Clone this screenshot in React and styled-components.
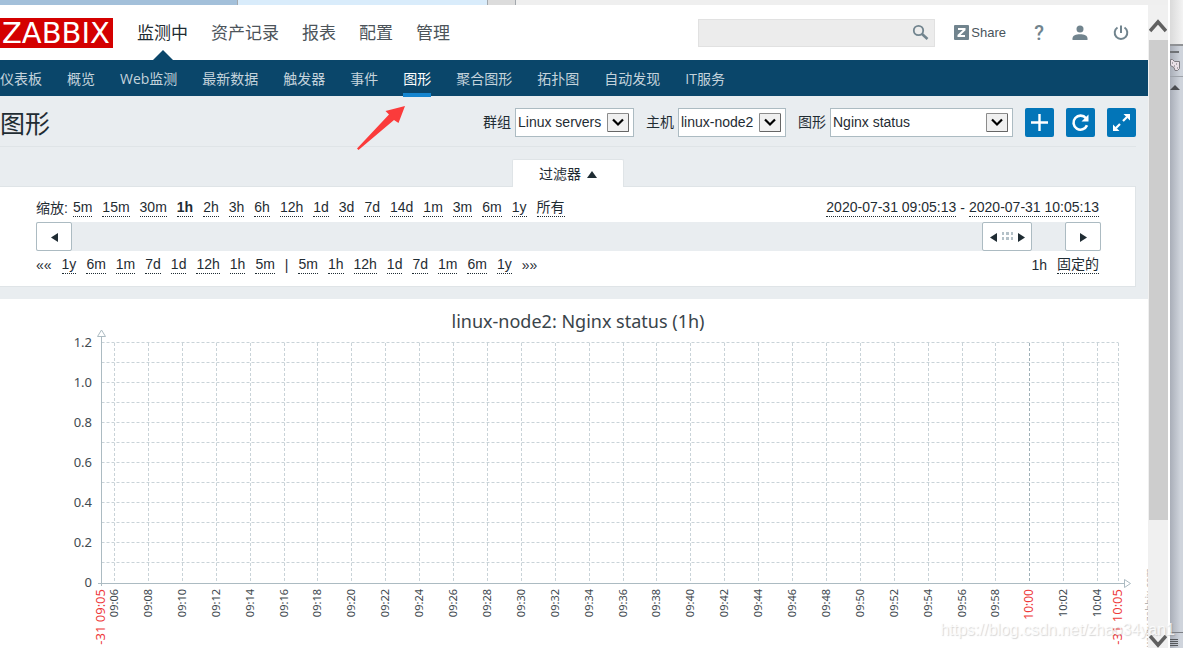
import React from "react";
import styled, { createGlobalStyle, css } from "styled-components";

const ui = `"Liberation Sans", "Noto Sans CJK SC", sans-serif`;
const ink = "#1f2c33";
const line = "#dfe4e7";
const blue = "#0275b8";
const navy = "#0a466a";

const GlobalStyle = createGlobalStyle`
  * { box-sizing: border-box; }
  body { margin: 0; font: 14px/18px ${ui}; color: ${ink}; background: #fff; }
  a { color: inherit; text-decoration: none; }
  button { font: inherit; color: inherit; padding: 0; cursor: pointer; }
`;

const Desktop = styled.div`
  position: relative;
  display: flex;
  height: 100vh;
  overflow: hidden;
`;
const Browser = styled.div`
  flex: 1;
  min-width: 0;
  display: flex;
  flex-direction: column;
`;
const TabStrip = styled.div`
  flex: none;
  display: flex;
  height: 5px;
  background: #efefef;
`;
const Tab = styled.div`
  width: ${(p) => p.$w}px;
  background: ${(p) => p.$bg};
  border-right: 1px solid #a3a8ad;
`;
const Viewport = styled.div`
  flex: 1;
  min-height: 0;
  display: flex;
`;
const Page = styled.div`
  flex: 1;
  min-width: 0;
  overflow: hidden;
  background: #e9edf0;
`;

const Header = styled.header`
  display: flex;
  height: 55px;
  background: #fff;
`;
const Logo = styled.a`
  align-self: flex-start;
  margin-top: 13px;
  width: 113px;
  height: 30px;
  padding-left: 2px;
  background: #d40000;
  color: #fff;
  font: 29px/31px "DejaVu Sans", sans-serif;
`;
const MainMenu = styled.nav`
  display: flex;
  gap: 23px;
  margin-left: 24px;
  font-size: 17px;
  line-height: 58px;
`;
const MainLink = styled.a`
  position: relative;
  color: ${(p) => (p.$active ? ink : "#4c545a")};
  ${(p) =>
    p.$active &&
    css`
      &::after {
        content: "";
        position: absolute;
        left: 50%;
        bottom: 0;
        margin-left: -10px;
        border: 10px solid transparent;
        border-top: 0;
        border-bottom-color: ${navy};
      }
    `}
`;
const Tools = styled.div`
  display: flex;
  align-items: center;
  margin-left: auto;
  padding-right: 15px;
  gap: 17px;
  color: #71848e;
`;
const SearchBox = styled.label`
  display: flex;
  align-items: center;
  width: 237px;
  height: 28px;
  padding-right: 5px;
  border: 1px solid #e1e1e1;
  background: #ececec;
`;
const SearchInput = styled.input`
  flex: 1;
  min-width: 0;
  border: 0;
  background: transparent;
  outline: none;
`;
const Share = styled.a`
  display: flex;
  align-items: center;
  gap: 2px;
  margin-left: 2px;
  margin-right: 4px;
  font-size: 13px;
  color: #48545b;
`;
const ToolButton = styled.button`
  display: grid;
  place-items: center;
  width: 24px;
  height: 24px;
  border: 0;
  background: none;
`;
const Question = styled.span`
  font: 500 20px/24px Roboto, sans-serif;
  color: #71848e;
`;

const SubMenu = styled.nav`
  display: flex;
  gap: 25px;
  height: 36px;
  background: ${navy};
  font: 14px/38px "Open Sans", "Noto Sans CJK SC", sans-serif;
`;
const SubLink = styled.a`
  height: 37px;
  color: ${(p) => (p.$active ? "#fff" : "#c4d3dc")};
  border-bottom: ${(p) => (p.$active ? "4px solid #1585cf" : "0")};
  white-space: nowrap;
`;

const TitleBar = styled.div`
  display: flex;
  align-items: center;
  height: 51px;
  margin-right: 12px;
  border-bottom: 1px solid ${line};
`;
const Title = styled.h1`
  margin: 0 auto 0 0;
  padding-top: 6px;
  font: 25px/50px ${ui};
`;
const Controls = styled.form`
  display: flex;
  align-items: center;
  gap: 12px;
  padding-top: 2px;
`;
const Field = styled.label`
  display: flex;
  align-items: center;
  gap: 4px;
`;
const SelectWrap = styled.span`
  position: relative;
  width: ${(p) => p.$w}px;
`;
const Select = styled.select`
  appearance: none;
  display: block;
  width: 100%;
  height: 29px;
  padding: 0 0 0 2px;
  border: 1px solid #acbbc2;
  border-radius: 0;
  background: #fff;
  color: ${ink};
  font: 14px ${ui};
`;
const Chevron = styled.svg`
  position: absolute;
  right: 5px;
  top: 5px;
  width: 22px;
  height: 19px;
  pointer-events: none;
`;
const BlueButton = styled.button`
  display: grid;
  place-items: center;
  width: 29px;
  height: 29px;
  border: 0;
  border-radius: 2px;
  background: ${blue};
`;

const FilterArea = styled.section`
  padding: 12px 12px 12px 0;
`;
const FilterTab = styled.button`
  position: relative;
  display: flex;
  align-items: center;
  justify-content: center;
  gap: 6px;
  width: 112px;
  height: 28px;
  margin: 0 auto -1px;
  border: 1px solid ${line};
  border-bottom: 0;
  border-radius: 2px 2px 0 0;
  background: #fff;
`;
const FilterPanel = styled.div`
  padding: 0 34px 0 36px;
  border: 1px solid ${line};
  border-left: 0;
  background: #fff;
`;
const RangeRow = styled.div`
  display: flex;
  align-items: flex-end;
  justify-content: space-between;
  height: 35px;
  padding-bottom: ${(p) => p.$pad}px;
  padding-right: 2px;
`;
const Links = styled.div`
  display: flex;
  gap: ${(p) => p.$gap}px;
  white-space: pre;
`;
const Plain = styled.span`
  height: 18px;
`;
const RangeLink = styled.a`
  height: 18px;
  line-height: 17px;
  border-bottom: 1px dotted ${ink};
  font-weight: ${(p) => (p.$active ? 700 : 400)};
`;
const Track = styled.div`
  display: flex;
  height: 29px;
  background: #e9edf0;
`;
const TrackButton = styled.button`
  display: flex;
  align-items: center;
  justify-content: center;
  gap: 5px;
  width: ${(p) => p.$w}px;
  margin-left: ${(p) => (p.$push ? "auto" : 0)};
  margin-right: ${(p) => (p.$push ? "33px" : 0)};
  border: 1px solid #acbbc2;
  border-radius: 2px;
  background: #fff;
`;

const ChartPanel = styled.main`
  background: #fff;
`;
const ChartSvg = styled.svg`
  display: block;
  width: 100%;
  font-family: "Noto Sans", sans-serif;
`;

const Scrollbar = styled.div`
  display: flex;
  flex-direction: column;
  width: 20px;
  padding-top: 1px;
  background: #f0f0f0;
`;
const ScrollEnd = styled.button`
  display: grid;
  place-items: center;
  height: ${(p) => p.$h}px;
  padding-top: ${(p) => p.$pad}px;
  border: 0;
  background: none;
`;
const ScrollThumb = styled.div`
  flex: 480;
  margin-left: 1px;
  background: #cdcdcd;
`;
const ScrollRest = styled.div`
  flex: 113;
`;

const SideWindow = styled.aside`
  display: flex;
  flex-direction: column;
  width: 15px;
  border-left: 2px solid #fff;
  background: linear-gradient(90deg, #a9aeb8, #cfd4dc 80%);
`;
const SideTop = styled.div`
  height: 46px;
  border-bottom: 2px solid #8f9194;
  background: linear-gradient(90deg, #dadada, #f3f3f3);
`;
const SideTools = styled.svg`
  display: block;
  width: 13px;
  height: 48px;
`;
const SideFoot = styled.svg`
  display: block;
  width: 13px;
  height: 16px;
  margin-top: auto;
`;

const RedArrow = styled.svg`
  position: absolute;
  left: 356px;
  top: 104px;
  width: 52px;
  height: 48px;
  pointer-events: none;
`;
const Watermark = styled.div`
  position: absolute;
  right: 8px;
  bottom: 8px;
  font: 16px/20px "Liberation Sans", sans-serif;
  color: rgba(255, 255, 255, 0.8);
  text-shadow: 1px 1px 1px rgba(120, 120, 120, 0.3);
  pointer-events: none;
`;

const Triangle = ({ dir }) => (
  <svg width={dir === "up" ? 10 : 7} height={dir === "up" ? 8 : 10} fill={ink}>
    <path d={{ left: "M7 1v9L0 5.500z", right: "M0 1v9l7-4.500z", up: "M0 8h10L5 1z" }[dir]} />
  </svg>
);

function Dropdown({ label, value, width }) {
  return (
    <Field>
      {label}
      <SelectWrap $w={width}>
        <Select defaultValue={value}>
          <option>{value}</option>
        </Select>
        <Chevron viewBox="0 0 22 19">
          <path fill="#f0f0f0" stroke="#8c8c8c" d="M.5.5h21v18H.5z" />
          <path fill="none" stroke="#666" d="M1 18.500h20.500V1" />
          <path fill="none" stroke="#000" strokeWidth="2.200" d="M6 6.500l5 5 5-5" />
        </Chevron>
      </SelectWrap>
    </Field>
  );
}

const mainItems = ["监测中", "资产记录", "报表", "配置", "管理"];
const subItems = ["仪表板", "概览", "Web监测", "最新数据", "触发器", "事件", "图形", "聚合图形", "拓扑图", "自动发现", "IT服务"];
const zooms = ["5m", "15m", "30m", "1h", "2h", "3h", "6h", "12h", "1d", "3d", "7d", "14d", "1m", "3m", "6m", "1y", "所有"];
const back = ["1y", "6m", "1m", "7d", "1d", "12h", "1h", "5m"];
const forward = [...back].reverse();

const LEFT = 101.5;
const RIGHT = 1118.5;
const BASE = 284.5;
const minutes = Array.from({ length: 30 }, (_, i) => {
  const m = 6 + i * 2;
  const label = m < 60 ? `09:${String(m).padStart(2, "0")}` : `10:${String(m - 60).padStart(2, "0")}`;
  return { label, x: Math.round(114 + i * 33.9) + 0.5, hour: m === 60 };
});
const rows = Array.from({ length: 12 }, (_, i) => Math.floor(BASE - 0.5 - (i + 1) * 20.08) + 0.5);
const yLabels = ["0", "0.2", "0.4", "0.6", "0.8", "1.0", "1.2"];

function TimeLabel({ x, size = 11, fill = "#3f4a50", children }) {
  return (
    <text transform={`translate(${x} 290) rotate(-90)`} textAnchor="end" fontSize={size} fill={fill}>
      {children}
    </text>
  );
}

function Chart() {
  return (
    <ChartSvg viewBox="0 0 1148 349" role="img" aria-label="Nginx status">
      <text x="578" y="29" textAnchor="middle" fontSize="18" fill="#3a444a">
        linux-node2: Nginx status (1h)
      </text>
      <g stroke="#c9d3d8" strokeDasharray="3 2">
        {rows.map((y) => (
          <line key={y} x1={LEFT} x2={RIGHT} y1={y} y2={y} />
        ))}
        {minutes.map((m) => (
          <line key={m.label} x1={m.x} x2={m.x} y1="44" y2={BASE} stroke={m.hour ? "#9fb0b8" : undefined} />
        ))}
        <line x1={RIGHT} x2={RIGHT} y1="44" y2={BASE} />
      </g>
      <g stroke="#acbbc2" fill="#fff">
        <path d="M101.500 37v250M98 284.500h1026" />
        <path d="M97.500 37.500h8l-4-6.500zM1124.500 280.500v8l6-4z" />
      </g>
      {yLabels.map((t, i) => (
        <text key={t} x="92" y={288 - i * 40} textAnchor="end" fontSize="13" fill="#3f4a50">
          {t}
        </text>
      ))}
      {minutes.map((m) => (
        <TimeLabel key={m.label} x={m.x + 3} size={m.hour ? 12 : 11} fill={m.hour ? "#ee3b3b" : undefined}>
          {m.label}
        </TimeLabel>
      ))}
      <TimeLabel x={105} size={13} fill="#ee3b3b">-31 09:05</TimeLabel>
      <TimeLabel x={1122} size={13} fill="#ee3b3b">-31 10:05</TimeLabel>
      <text transform="translate(1153 348) rotate(-90)" fontSize="10" fill="#b5b5b5">
        www.zabbix.com
      </text>
    </ChartSvg>
  );
}

export default function App() {
  return (
    <Desktop>
      <GlobalStyle />
      <Browser>
        <TabStrip>
          <Tab $w={238} $bg="#a3c0da" />
          <Tab $w={250} $bg="#d9ecfb" />
          <Tab $w={28} $bg="#dcdcdc" />
        </TabStrip>
        <Viewport>
          <Page>
            <Header>
              <Logo href="#">ZABBIX</Logo>
              <MainMenu>
                {mainItems.map((t, i) => (
                  <MainLink key={t} href="#" $active={i === 0}>{t}</MainLink>
                ))}
              </MainMenu>
              <Tools>
                <SearchBox>
                  <SearchInput type="search" aria-label="Search" />
                  <svg width="17" height="17" viewBox="0 0 17 17" fill="none" stroke="#71848e">
                    <circle cx="6.500" cy="6.500" r="4.700" strokeWidth="1.800" />
                    <path d="M10 10l5.500 5" strokeWidth="2.600" />
                  </svg>
                </SearchBox>
                <Share href="#">
                  <svg width="15" height="15" viewBox="0 0 15 15">
                    <rect width="15" height="15" rx="1" fill="#71848e" />
                    <path d="M4 4h6.500v.8L4.500 10.500v.6H11" fill="none" stroke="#fff" strokeWidth="2" />
                  </svg>
                  Share
                </Share>
                <ToolButton aria-label="Help"><Question>?</Question></ToolButton>
                <ToolButton aria-label="Profile">
                  <svg width="16" height="16" viewBox="0 0 16 16" fill="#71848e">
                    <circle cx="8" cy="4" r="3.500" />
                    <path d="M.5 15v-1.500C.5 10.500 4 9.300 8 9.300s7.500 1.200 7.500 4.200V15z" />
                  </svg>
                </ToolButton>
                <ToolButton aria-label="Sign out">
                  <svg width="16" height="16" viewBox="0 0 16 16" fill="none" stroke="#71848e" strokeWidth="2">
                    <path d="M4.500 2.500a6.300 6.300 0 1 0 7 0M8 .5v7.500" />
                  </svg>
                </ToolButton>
              </Tools>
            </Header>
            <SubMenu>
              {subItems.map((t) => (
                <SubLink key={t} href="#" $active={t === "图形"}>{t}</SubLink>
              ))}
            </SubMenu>
            <TitleBar>
              <Title>图形</Title>
              <Controls>
                <Dropdown label="群组" value="Linux servers" width={119} />
                <Dropdown label="主机" value="linux-node2" width={108} />
                <Dropdown label="图形" value="Nginx status" width={183} />
                <BlueButton type="button" aria-label="Add">
                  <svg width="19" height="19" stroke="#fff" strokeWidth="2.400"><path d="M1 9.500h17M9.500 1v17" /></svg>
                </BlueButton>
                <BlueButton type="button" aria-label="Refresh">
                  <svg width="19" height="19" viewBox="0 0 19 19" fill="none" stroke="#fff">
                    <path d="M15 5.300A7 7 0 1 0 16 12.300" strokeWidth="2.600" />
                    <path d="M17.500 1.500v7h-7z" fill="#fff" stroke="none" />
                  </svg>
                </BlueButton>
                <BlueButton type="button" aria-label="Full screen">
                  <svg width="19" height="19" viewBox="0 0 19 19" fill="#fff" stroke="#fff">
                    <path d="M18 1v6.500L11.500 1zM1 18v-6.500L7.500 18z" stroke="none" />
                    <path d="M11 8l4-4M4 15l4-4" strokeWidth="2.200" />
                  </svg>
                </BlueButton>
              </Controls>
            </TitleBar>
            <FilterArea>
              <FilterTab>过滤器 <Triangle dir="up" /></FilterTab>
              <FilterPanel>
                <RangeRow $pad={5}>
                  <Links $gap={5}>
                    <Plain>缩放:</Plain>
                    <Links $gap={10}>
                      {zooms.map((t) => (
                        <RangeLink key={t} href="#" $active={t === "1h"}>{t}</RangeLink>
                      ))}
                    </Links>
                  </Links>
                  <Links $gap={4}>
                    <RangeLink href="#">2020-07-31 09:05:13</RangeLink>
                    <Plain>-</Plain>
                    <RangeLink href="#">2020-07-31 10:05:13</RangeLink>
                  </Links>
                </RangeRow>
                <Track>
                  <TrackButton $w={36} aria-label="Back"><Triangle dir="left" /></TrackButton>
                  <TrackButton $w={50} $push aria-label="Range">
                    <Triangle dir="left" />
                    <svg width="11" height="9" fill="#b4c1c8">
                      <path d="M0 0h2v3H0zM4 0h3v3H4zM9 0h2v3H9zM0 5h2v3H0zM4 5h3v3H4zM9 5h2v3H9z" />
                    </svg>
                    <Triangle dir="right" />
                  </TrackButton>
                  <TrackButton $w={36} aria-label="Forward"><Triangle dir="right" /></TrackButton>
                </Track>
                <RangeRow $pad={12}>
                  <Links $gap={10}>
                    <Plain>««</Plain>
                    {back.map((t) => <RangeLink key={t} href="#">{t}</RangeLink>)}
                    <Plain>|</Plain>
                    {forward.map((t) => <RangeLink key={t} href="#">{t}</RangeLink>)}
                    <Plain>»»</Plain>
                  </Links>
                  <Links $gap={10}>
                    <Plain>1h</Plain>
                    <RangeLink href="#">固定的</RangeLink>
                  </Links>
                </RangeRow>
              </FilterPanel>
            </FilterArea>
            <ChartPanel><Chart /></ChartPanel>
          </Page>
          <Scrollbar>
            <ScrollEnd $h={34} $pad={6} aria-label="Scroll up">
              <svg width="18" height="14" fill="none" stroke="#606060" strokeWidth="3.500"><path d="M1 12l8-9 8 9" /></svg>
            </ScrollEnd>
            <ScrollThumb />
            <ScrollRest />
            <ScrollEnd $h={15} $pad={0} aria-label="Scroll down">
              <svg width="18" height="14" fill="none" stroke="#606060" strokeWidth="3.500"><path d="M1 2l8 9 8-9" /></svg>
            </ScrollEnd>
          </Scrollbar>
        </Viewport>
      </Browser>
      <SideWindow>
        <SideTop />
        <SideTools viewBox="0 0 13 48">
          <path fill="#6f7276" d="M0 5h9v2H0z" />
          <path fill="#e8dfe6" stroke="#7d7a80" d="M.5 13.500h2l2 2h5v7l-2 2H5l-1-3-3.500-2z" />
          <path stroke="#6c6a70" d="M2 17h1M6 18h1M4 20h1M7 22h1" />
          <path fill="#9ea3aa" d="M0 30h13v1H0z" />
          <path fill="#4a4c50" d="M0 44l5-5 5 5z" />
        </SideTools>
        <SideFoot viewBox="0 0 13 16">
          <path fill="#7d8086" d="M0 0h13v1H0z" />
          <path fill="#55585c" d="M0 7h8v1H0zM0 9h8v1H0zM0 11h8v1H0zM0 13h8v1H0z" />
        </SideFoot>
      </SideWindow>
      <RedArrow viewBox="0 0 52 48">
        <path fill="#fb3b3b" d="M49 2L29.500 7l3.500 3.500L1 44.500l1.500 1.500L38 16l4.500 3z" />
      </RedArrow>
      <Watermark>https://blog.csdn.net/zhao34yan1</Watermark>
    </Desktop>
  );
}
